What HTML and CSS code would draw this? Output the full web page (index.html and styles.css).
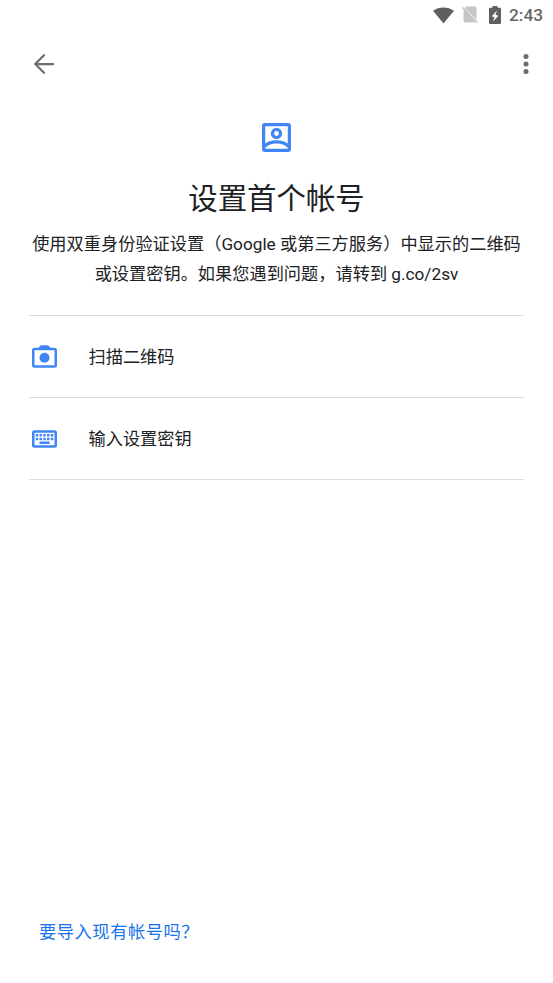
FILE: index.html
```html
<!DOCTYPE html>
<html lang="zh-CN">
<head>
<meta charset="utf-8">
<title>设置首个帐号</title>
<link rel="stylesheet" href="styles.css">
</head>
<body>
<div class="screen">
  <div class="status">
    <svg class="wifi" viewBox="0 0 22 17"><path d="M0 3.600C3 1.200 7 0 11 0s8 1.200 11 3.600L11 17z"/></svg>
    <svg class="nosim" viewBox="0 0 16 18"><path d="M4 .5h9.500q1 0 1 1v12.300L2.800 1.700zM0 1.900l1.100-1.100L16 16.200l-1.100 1.100-1.200-1.200q-.3.400-1 .4H3q-1.500 0-1.500-1.500V3.500z"/></svg>
    <svg class="battery" viewBox="0 0 12 18"><path fill-rule="evenodd" d="M3.500 0h5v1.800H11q1 0 1 1V17q0 1-1 1H1q-1 0-1-1V2.800q0-1 1-1h2.500zM8 4.500L2.800 10.300l2.700.9L4 15.500 9.400 9.700l-2.900-.9z"/></svg>
    <span class="time">2:43</span>
  </div>
  <header class="bar">
    <svg class="back" viewBox="4 4 16 16"><path d="M5 12h14.300M12 5l-7 7 7 7"/></svg>
    <svg class="more" viewBox="0 0 6 20"><circle cx="3" cy="2.600" r="2.500"/><circle cx="3" cy="10" r="2.500"/><circle cx="3" cy="17.400" r="2.500"/></svg>
  </header>
  <main>
    <svg class="account" viewBox="3 3 18 18"><rect x="4" y="4" width="16" height="16" rx=".8"/><circle cx="12" cy="9.500" r="2.500"/><path d="M4.500 17.500C6.200 15.700 8.800 14.700 12 14.700s5.800 1 7.500 2.800"/></svg>
    <h1>设置首个帐号</h1>
    <p>使用双重身份验证设置（Google 或第三方服务）中显示的二维码<br>或设置密钥。如果您遇到问题，请转到 g.co/2sv</p>
    <div class="list">
      <div class="row"><svg class="camera" viewBox="2 3 20 18"><path fill-rule="evenodd" d="M20 5h-3.200L15.600 3.600Q15 3 14.200 3H9.800Q9 3 8.400 3.600L7.200 5H4a2 2 0 0 0-2 2v12a2 2 0 0 0 2 2h16a2 2 0 0 0 2-2V7a2 2 0 0 0-2-2zM4 7v12h16V7z"/><circle cx="12" cy="13" r="4"/></svg><span>扫描二维码</span></div>
      <div class="row"><svg class="keyboard" viewBox="2 5 20 14"><path fill-rule="evenodd" d="M20 5H4a2 2 0 0 0-2 2v10a2 2 0 0 0 2 2h16a2 2 0 0 0 2-2V7a2 2 0 0 0-2-2zM4 7v10h16V7z"/><path d="M5 8h2v2H5zm3 0h2v2H8zm3 0h2v2h-2zm3 0h2v2h-2zm3 0h2v2h-2zM5 11h2v2H5zm3 0h2v2H8zm3 0h2v2h-2zm3 0h2v2h-2zm3 0h2v2h-2zM8 14h8v2H8z"/></svg><span>输入设置密钥</span></div>
    </div>
  </main>
  <footer><a>要导入现有帐号吗？</a></footer>
</div>
</body>
</html>
```
FILE: styles.css
```css
* { box-sizing: border-box; }
body { margin: 0; background: #fff; color: #202124; font-family: Roboto, "Noto Sans CJK SC", sans-serif; }
svg { display: block; flex: none; }
.screen { width: 553px; height: 983px; display: flex; flex-direction: column; overflow: hidden; }
.status { height: 30px; display: flex; align-items: center; padding-left: 433px; fill: #5f5f5f; }
.wifi { width: 21px; height: 17px; }
.nosim { width: 16px; height: 18px; margin-left: 8px; fill: #c6c6c6; }
.battery { width: 12px; height: 18px; margin-left: 11px; }
.time { margin-left: 8px; font-size: 17.300px; line-height: 20px; font-weight: 500; color: #666; }
.bar { height: 68px; display: flex; align-items: center; justify-content: space-between; padding: 0 24px 0 34px; fill: #6b6b6b; }
.back { width: 20px; height: 20px; fill: none; stroke: #6e6e6e; stroke-width: 1.800; stroke-linecap: round; stroke-linejoin: round; }
.more { width: 6px; height: 20px; }
main { padding: 25px 29px 0; display: flex; flex-direction: column; align-items: center; }
.account { width: 29px; height: 29px; fill: none; stroke: #4285f4; stroke-width: 2; }
h1 { margin: 27px 0 0; font-size: 29.400px; line-height: 40px; font-weight: 400; }
p { margin: 10px 0 0; font-size: 17.220px; line-height: 30px; text-align: center; white-space: nowrap; }
.list { margin-top: 26px; width: 495px; border-top: 1px solid #dadce0; }
.row { height: 82px; display: flex; align-items: center; border-bottom: 1px solid #dadce0; padding-left: 3px; gap: 31.500px; font-size: 17.200px; fill: #4285f4; }
.row span { padding-bottom: 2px; }
.camera, .keyboard { width: 25px; }
.camera { height: 23px; }
.keyboard { height: 18px; }
footer { margin-top: auto; padding: 0 39px 36px; font-size: 17.300px; letter-spacing: .5px; line-height: 30px; color: #1a73e8; }
```
